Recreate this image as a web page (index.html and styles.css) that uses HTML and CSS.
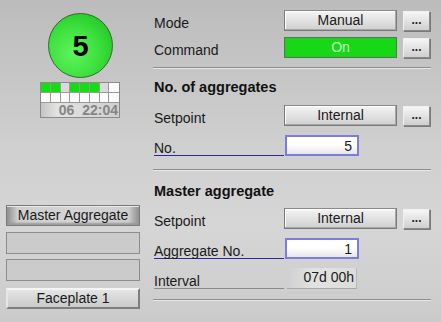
FILE: index.html
```html
<!DOCTYPE html>
<html>
<head>
<meta charset="utf-8">
<link rel="stylesheet" href="styles.css">
</head>
<body>
<div class="root">
  <div class="left">
    <div class="lamp">5</div>
    <div class="status">
      <div class="cells">
        <span class="c g"></span><span class="c g"></span><span class="c l"></span><span class="c g"></span><span class="c g"></span><span class="c g"></span><span class="c l"></span><span class="c w"></span>
        <span class="c w"></span><span class="c w"></span><span class="c w"></span><span class="c w"></span><span class="c w"></span><span class="c w"></span><span class="c w"></span><span class="c w"></span>
      </div>
      <div class="time">06&nbsp; 22:04</div>
    </div>
    <div class="navs">
      <div class="nav dark">Master Aggregate</div>
      <div class="nav empty"></div>
      <div class="nav empty"></div>
      <div class="nav raised">Faceplate 1</div>
    </div>
  </div>
  <div class="right">
    <div class="row first">
      <span class="lbl">Mode</span>
      <span class="btn">Manual</span>
      <span class="dots">...</span>
    </div>
    <div class="row r6">
      <span class="lbl">Command</span>
      <span class="btn on">On</span>
      <span class="dots">...</span>
    </div>
    <div class="sep s1"></div>
    <div class="hdr h1">No. of aggregates</div>
    <div class="row">
      <span class="lbl">Setpoint</span>
      <span class="btn">Internal</span>
      <span class="dots">...</span>
    </div>
    <div class="row r9">
      <span class="lbl ul">No.</span>
      <span class="inp">5</span>
      <span class="nodots"></span>
    </div>
    <div class="sep s2"></div>
    <div class="hdr h2">Master aggregate</div>
    <div class="row">
      <span class="lbl">Setpoint</span>
      <span class="btn">Internal</span>
      <span class="dots">...</span>
    </div>
    <div class="row r9">
      <span class="lbl ul">Aggregate No.</span>
      <span class="inp">1</span>
      <span class="nodots"></span>
    </div>
    <div class="row r9">
      <span class="lbl ulg">Interval</span>
      <span class="out">07d 00h</span>
      <span class="nodots"></span>
    </div>
    <div class="sep s3"></div>
  </div>
</div>
</body>
</html>
```
FILE: styles.css
```css
* { box-sizing: border-box; }
html, body { margin: 0; padding: 0; }
body {
  width: 441px; height: 322px; overflow: hidden;
  font-family: "Liberation Sans", Arial, sans-serif;
  font-size: 14px; color: #1a1a1a;
  background: linear-gradient(to bottom, #bcbcbc 0%, #cfcfcf 45%, #d6d6d6 70%, #cbcbcb 100%);
}
.root { display: flex; height: 322px; }
.left { width: 154px; display: flex; flex-direction: column; }
.lamp {
  width: 65px; height: 65px; margin: 13px 0 0 48px;
  border-radius: 50%;
  border: 1px solid #2f6b2f;
  background: radial-gradient(circle at 38% 62%, #5ef35e 0%, #3ee23e 45%, #22c522 85%, #1aa51a 100%);
  display: flex; align-items: center; justify-content: center;
  font-weight: bold; font-size: 29px; color: #000;
  padding-top: 1px;
}
.status { width: 80px; margin: 4px 0 0 40px; border: 1px solid #8a8a8a; }
.cells { display: grid; grid-template-columns: repeat(8, 1fr); }
.c { height: 10px; border-right: 1px solid #9a9a9a; border-bottom: 1px solid #9a9a9a; }
.c:nth-child(8n) { border-right: none; }
.g { background: #10e010; }
.l { background: #dadada; }
.w { background: #fbfbfb; }
.time {
  height: 14px; line-height: 14px; text-align: right; padding-right: 1px;
  font-weight: bold; font-size: 14px; color: #858585;
  background: linear-gradient(to right, #c4c4c4 0%, #e2e2e2 20%, #d0d0d0 100%);
}
.navs { margin: 87px 0 0 6px; width: 134px; display: flex; flex-direction: column; }
.nav { height: 21px; text-align: center; line-height: 19px; font-size: 14px; color: #1a1a1a; }
.dark {
  border: 1px solid #7a7a7a;
  background: linear-gradient(to right, #8e8e8e 0%, #cfcfcf 8%, #d4d4d4 50%, #cfcfcf 92%, #8e8e8e 100%);
  box-shadow: inset 0 1px 0 #e8e8e8, inset 0 -2px 2px #9a9a9a;
}
.empty { margin-top: 6px; height: 22px; border: 1px solid #8c8c8c; background: #cbcbcb; }
.empty + .empty { margin-top: 5px; }
.raised {
  margin-top: 7px; height: 21px;
  border-top: 2px solid #f4f4f4; border-left: 2px solid #e6e6e6;
  border-right: 2px solid #7e7e7e; border-bottom: 2px solid #7e7e7e;
  background: linear-gradient(to bottom, #e4e4e4, #cacaca);
  line-height: 17px;
}
.right { width: 277px; display: flex; flex-direction: column; }
.row { display: flex; align-items: center; height: 21px; }
.row.first { margin-top: 10px; }
.r6 { margin-top: 6px; }
.r9 { margin-top: 9px; }
.lbl { width: 130px; height: 21px; line-height: 26px; color: #1a1a1a; white-space: nowrap; }
.ul { border-bottom: 1px solid #2a2aa0; }
.ulg { border-bottom: 1px solid #8a8a8a; }
.btn {
  width: 113px; height: 21px; text-align: center; line-height: 18px;
  border: 1px solid #7a7a7a;
  border-top-color: #8a8a8a;
  background: linear-gradient(to bottom, #f4f4f4 0%, #e2e2e2 50%, #cfcfcf 100%);
  box-shadow: inset -1px -1px 0 #a8a8a8, inset 1px 1px 0 #ffffff;
}
.btn.on {
  background: #16d816; color: #c8ffc8;
  border: 1px solid #3d8a3d;
  box-shadow: inset 0 0 0 1px #30c030;
}
.dots {
  width: 27px; height: 20px; margin-left: 6px; text-align: center; line-height: 16px;
  font-weight: bold; font-size: 12px; color: #222;
  border: 1px solid #8a8a8a; border-top-color: #f0f0f0; border-left-color: #f0f0f0;
  background: linear-gradient(to bottom, #f6f6f6, #cfcfcf);
  box-shadow: 1px 1px 0 #7a7a7a;
}
.nodots { width: 33px; }
.inp {
  width: 74px; height: 21px; margin-left: 1px; text-align: right; padding-right: 5px; line-height: 18px;
  font-size: 14px;
  border: 2px solid #7b7be0;
  background: linear-gradient(to bottom, #ffffff 0%, #ffffff 45%, #e6e6e6 100%);
}
.out {
  width: 70px; height: 21px; margin-left: 3px; text-align: right; padding-right: 2px; line-height: 19px;
  font-size: 14px;
  background: linear-gradient(to right, #d0d0d0 0%, #e2e2e2 40%, #dcdcdc 100%);
  border-bottom: 1px solid #a8a8a8; border-right: 1px solid #b8b8b8;
}
.sep { height: 2px; border-top: 1px solid #8e8e8e; border-bottom: 1px solid #e6e6e6; margin-left: -1px; }
.s1 { margin-top: 9px; }
.s2 { margin-top: 13px; }
.s3 { margin-top: 10px; }
.hdr { line-height: 16px; font-weight: bold; font-size: 14.5px; color: #111; }
.h1 { height: 36px; padding-top: 10px; }
.h2 { height: 37px; padding-top: 12px; }
```
